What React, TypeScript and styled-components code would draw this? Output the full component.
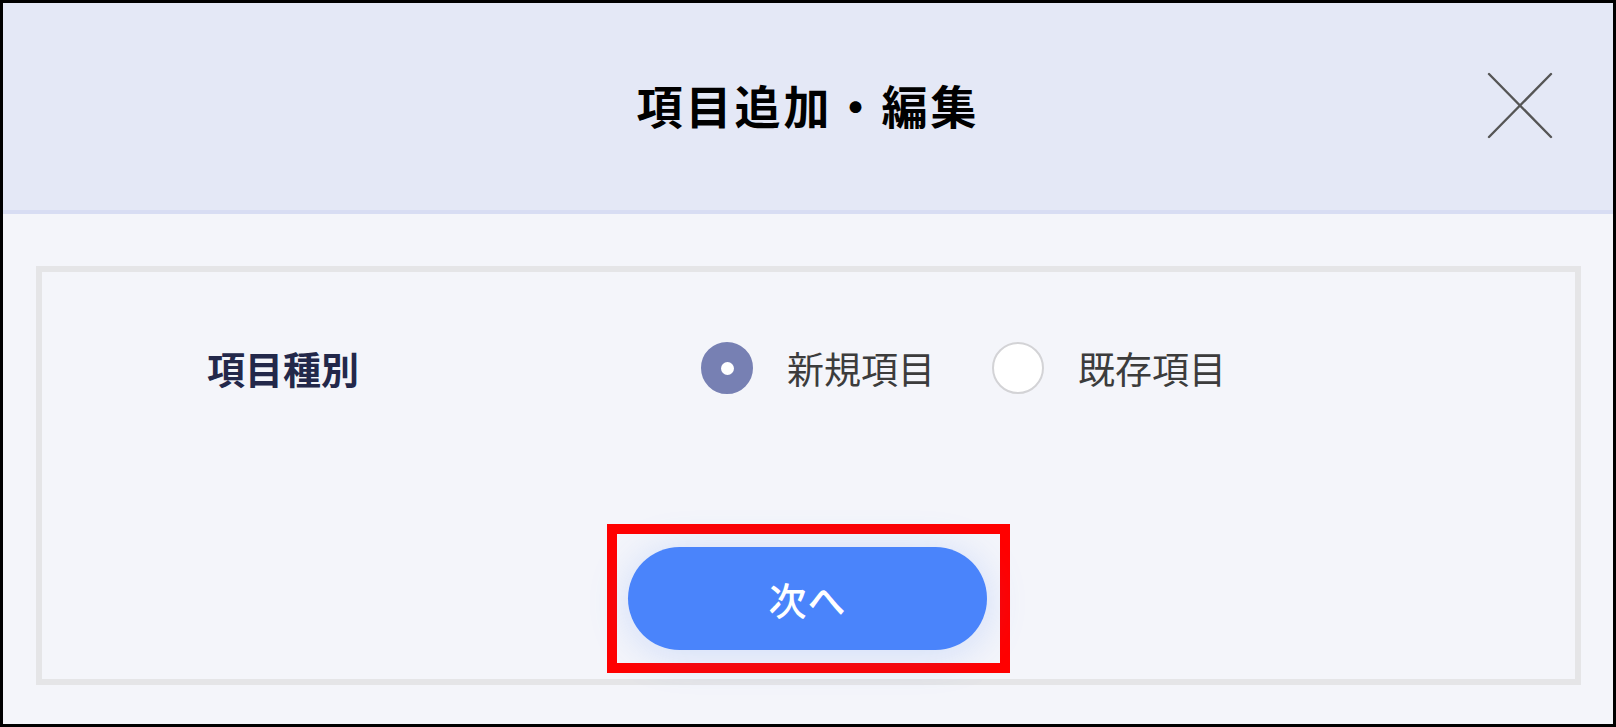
import React, { useState } from 'react';
import styled, { createGlobalStyle } from 'styled-components';

const GlobalStyle = createGlobalStyle`
  html, body {
    margin: 0;
    padding: 0;
    background: #ffffff;
  }
  body {
    font-family: "Noto Sans CJK JP", "Noto Sans", sans-serif;
  }
`;

const Frame = styled.div`
  box-sizing: border-box;
  width: 1616px;
  height: 727px;
  border: 3px solid #000000;
  display: flex;
  flex-direction: column;
  background: #f4f5fa;
  overflow: hidden;
`;

const Header = styled.div`
  position: relative;
  flex: 0 0 211px;
  box-sizing: border-box;
  display: flex;
  align-items: center;
  justify-content: center;
  background: #e4e8f6;
  border-bottom: 4px solid #d8ddf3;
  padding-bottom: 6px;
`;

const Title = styled.h1`
  margin: 0;
  font-size: 46px;
  font-weight: 700;
  letter-spacing: 3px;
  color: #000000;
  line-height: 1;
`;

const CloseButton = styled.button`
  position: absolute;
  right: 58px;
  top: 64px;
  width: 70px;
  height: 76px;
  padding: 0;
  border: none;
  background: none;
  cursor: pointer;
  display: flex;
  align-items: center;
  justify-content: center;
`;

const Body = styled.div`
  flex: 1;
  padding: 52px 32px 39px 33px;
  display: flex;
`;

const Panel = styled.div`
  flex: 1;
  border: 6px solid #e5e5e7;
  display: flex;
  flex-direction: column;
  align-items: center;
  padding: 70px 0 5px;
`;

const FieldRow = styled.div`
  align-self: stretch;
  display: flex;
  align-items: center;
  height: 52px;
  padding-left: 165px;
`;

const FieldLabel = styled.div`
  width: 494px;
  font-size: 38px;
  font-weight: 700;
  color: #23284a;
  line-height: 1;
`;

const RadioGroup = styled.div`
  display: flex;
  align-items: center;
  gap: 57px;
`;

const RadioOption = styled.label`
  display: flex;
  align-items: center;
  gap: 34px;
  cursor: pointer;
`;

const RadioCircle = styled.span<{ $checked: boolean }>`
  box-sizing: border-box;
  width: 52px;
  height: 52px;
  border-radius: 50%;
  display: flex;
  align-items: center;
  justify-content: center;
  background: ${({ $checked }) => ($checked ? '#7780b3' : '#ffffff')};
  border: 2px solid ${({ $checked }) => ($checked ? '#7780b3' : '#d3d3d6')};

  &::after {
    content: '';
    width: 13px;
    height: 13px;
    border-radius: 50%;
    background: #ffffff;
    display: ${({ $checked }) => ($checked ? 'block' : 'none')};
  }
`;

const RadioText = styled.span`
  font-size: 37px;
  color: #3c3c3c;
  line-height: 1;
`;

const Highlight = styled.div`
  margin-top: 130px;
  border: 10px solid #ff0000;
  padding: 13px 13px 13px 11px;
  display: flex;
`;

const NextButton = styled.button`
  width: 359px;
  height: 103px;
  border: none;
  border-radius: 52px;
  background: #4a84fb;
  color: #ffffff;
  font-family: "Noto Sans CJK JP", "Noto Sans", sans-serif;
  font-size: 38px;
  font-weight: 500;
  letter-spacing: 1px;
  cursor: pointer;
  box-shadow: 0 4px 40px rgba(74, 132, 251, 0.22);
`;

const CloseIcon = () => (
  <svg width="66" height="68" viewBox="0 0 66 68">
    <line x1="2" y1="3" x2="64" y2="66" stroke="#555555" strokeWidth="2.4" strokeLinecap="round" />
    <line x1="64" y1="3" x2="2" y2="66" stroke="#555555" strokeWidth="2.4" strokeLinecap="round" />
  </svg>
);

const options = ['新規項目', '既存項目'];

export default function App(): JSX.Element {
  const [selected, setSelected] = useState(options[0]);
  return (
    <>
      <GlobalStyle />
      <Frame>
        <Header>
          <Title>項目追加・編集</Title>
          <CloseButton type='button' aria-label='close'>
            <CloseIcon />
          </CloseButton>
        </Header>
        <Body>
          <Panel>
            <FieldRow>
              <FieldLabel>項目種別</FieldLabel>
              <RadioGroup>
                {options.map((opt) => (
                  <RadioOption key={opt} onClick={() => setSelected(opt)}>
                    <RadioCircle $checked={selected === opt} />
                    <RadioText>{opt}</RadioText>
                  </RadioOption>
                ))}
              </RadioGroup>
            </FieldRow>
            <Highlight>
              <NextButton type='button'>次へ</NextButton>
            </Highlight>
          </Panel>
        </Body>
      </Frame>
    </>
  );
}
